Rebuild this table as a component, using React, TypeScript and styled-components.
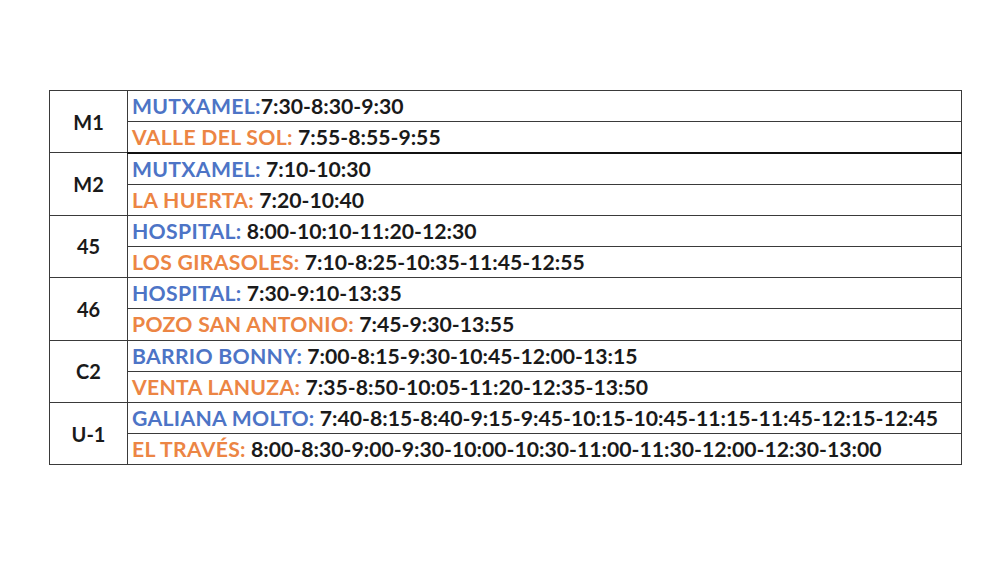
import styled, { createGlobalStyle } from 'styled-components';

const GlobalStyle = createGlobalStyle`
  html, body {
    margin: 0;
    padding: 0;
    background: #ffffff;
  }
`;

const Page = styled.div`
  width: 1000px;
  height: 563px;
  background: #ffffff;
  padding: 90px 0 0 49px;
  box-sizing: border-box;
  font-family: Lato, 'Open Sans', sans-serif;
  font-weight: 700;
`;

const Table = styled.table`
  border-collapse: collapse;
  width: 913px;
  border: 1.5px solid #3a3a3a;
`;

const LineCell = styled.td`
  width: 77px;
  text-align: center;
  vertical-align: middle;
  font-size: 20px;
  color: #1a1a1a;
  border: 1.5px solid #3a3a3a;
  padding: 0;
`;

const StopCell = styled.td<{ thick?: boolean }>`
  height: 31.2px;
  box-sizing: border-box;
  padding: 0 0 0 4px;
  font-size: 21.2px;
  line-height: 24px;
  color: #1a1a1a;
  white-space: nowrap;
  border: 1.5px solid #3a3a3a;
  border-bottom: ${(p) => (p.thick ? '2.5px solid #111' : '1.5px solid #3a3a3a')};
`;

const Stop = styled.span<{ tone: 'blue' | 'orange' }>`
  color: ${(p) => (p.tone === 'blue' ? '#4d74c6' : '#ec8544')};
  letter-spacing: 0.3px;
`;

type Route = {
  line: string;
  stops: { name: string; times: string }[];
};

const routes: Route[] = [
  {
    line: 'M1',
    stops: [
      { name: 'MUTXAMEL:', times: '7:30-8:30-9:30' },
      { name: 'VALLE DEL SOL:', times: ' 7:55-8:55-9:55' },
    ],
  },
  {
    line: 'M2',
    stops: [
      { name: 'MUTXAMEL:', times: ' 7:10-10:30' },
      { name: 'LA HUERTA:', times: ' 7:20-10:40' },
    ],
  },
  {
    line: '45',
    stops: [
      { name: 'HOSPITAL:', times: ' 8:00-10:10-11:20-12:30' },
      { name: 'LOS GIRASOLES:', times: ' 7:10-8:25-10:35-11:45-12:55' },
    ],
  },
  {
    line: '46',
    stops: [
      { name: 'HOSPITAL:', times: ' 7:30-9:10-13:35' },
      { name: 'POZO SAN ANTONIO:', times: ' 7:45-9:30-13:55' },
    ],
  },
  {
    line: 'C2',
    stops: [
      { name: 'BARRIO BONNY:', times: ' 7:00-8:15-9:30-10:45-12:00-13:15' },
      { name: 'VENTA LANUZA:', times: ' 7:35-8:50-10:05-11:20-12:35-13:50' },
    ],
  },
  {
    line: 'U-1',
    stops: [
      {
        name: 'GALIANA MOLTO:',
        times: ' 7:40-8:15-8:40-9:15-9:45-10:15-10:45-11:15-11:45-12:15-12:45',
      },
      {
        name: 'EL TRAVÉS:',
        times: ' 8:00-8:30-9:00-9:30-10:00-10:30-11:00-11:30-12:00-12:30-13:00',
      },
    ],
  },
];

export default function App() {
  return (
    <>
      <GlobalStyle />
      <Page>
        <Table>
          <tbody>
            {routes.map((r, ri) =>
              r.stops.map((s, si) => (
                <tr key={`${r.line}-${si}`}>
                  {si === 0 && <LineCell rowSpan={2}>{r.line}</LineCell>}
                  <StopCell thick={ri === 0 && si === 1}>
                    <Stop tone={si === 0 ? 'blue' : 'orange'}>{s.name}</Stop>
                    {s.times}
                  </StopCell>
                </tr>
              ))
            )}
          </tbody>
        </Table>
      </Page>
    </>
  );
}
